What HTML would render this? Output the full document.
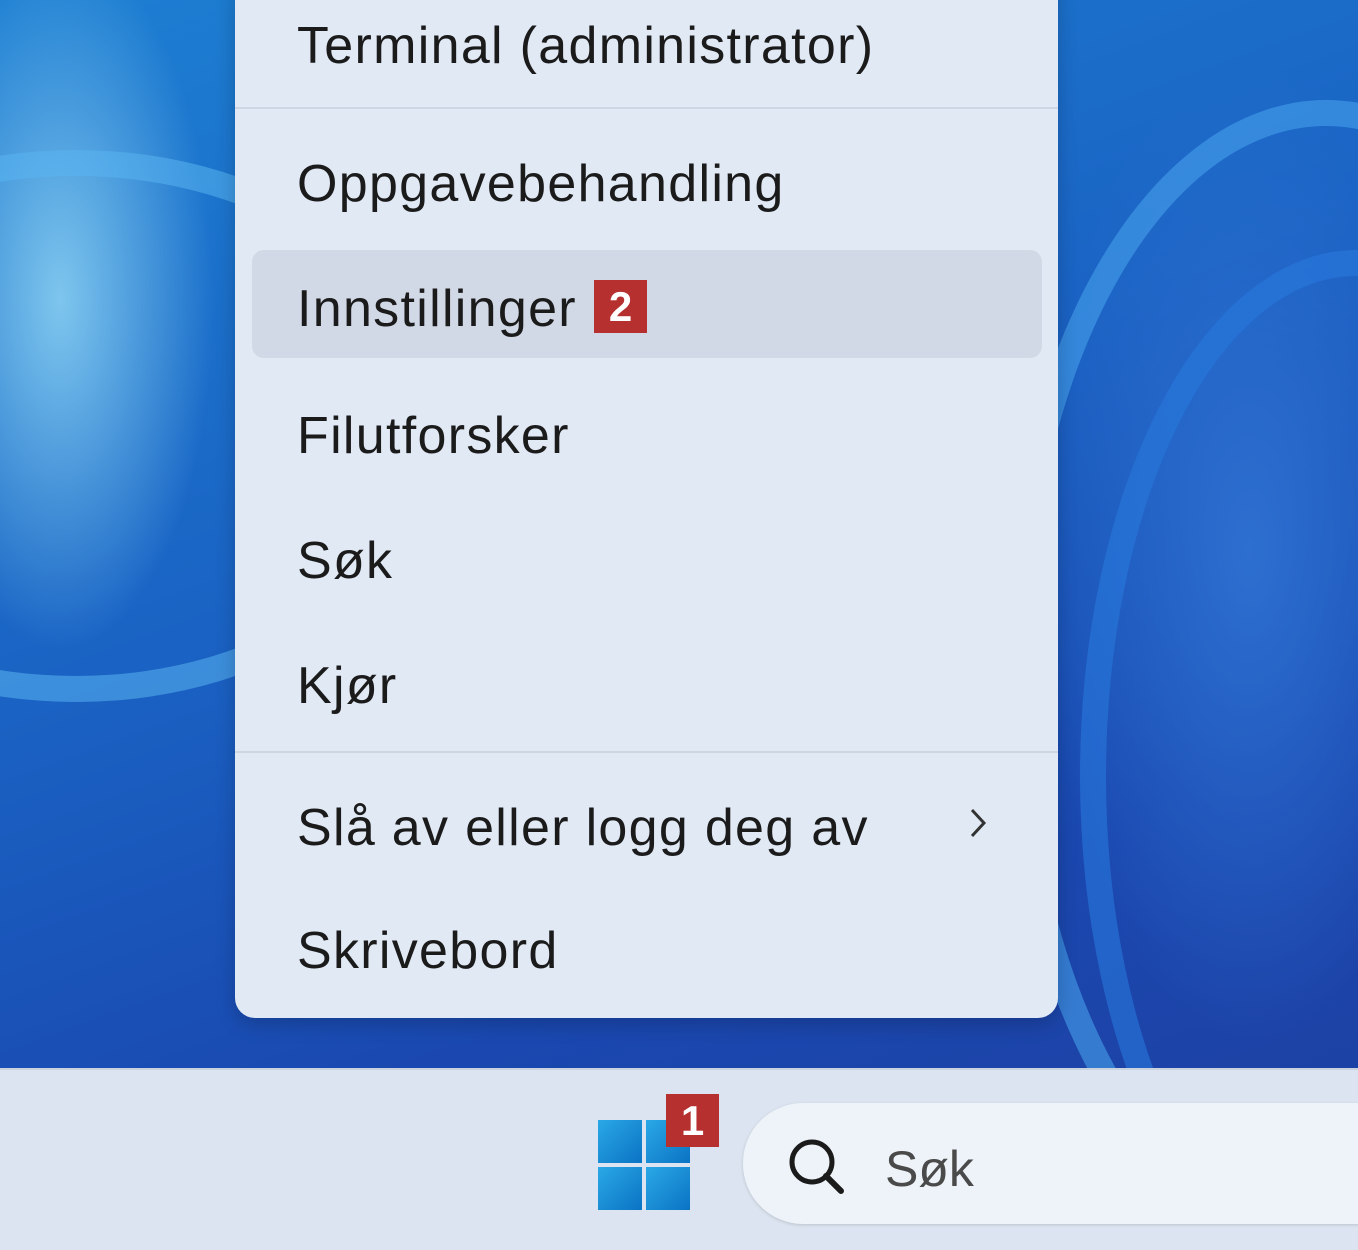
<!DOCTYPE html>
<html style="width:1358px;height:1250px;overflow:hidden;background:#dbe4f0"><head><meta charset="utf-8"><style>
html,body{margin:0;padding:0}
body{width:1358px;height:1250px;overflow:hidden;position:relative;font-family:"Liberation Sans",sans-serif;
background:
radial-gradient(ellipse 300px 700px at 1250px 550px,#2d6fd0 0%,rgba(45,111,208,0) 70%),
radial-gradient(ellipse 220px 500px at 60px 300px,#7ec6ee 0%,rgba(126,198,238,0) 70%),
linear-gradient(160deg,#1d7fd2 0%,#1a63c4 40%,#1a48b0 70%,#1f3fa0 100%);}
.sw{position:absolute;border-radius:50%;border:26px solid rgba(90,180,240,.55)}
.menu{position:absolute;left:235px;top:-30px;width:823px;height:1048px;background:#e0e9f4;border-radius:20px;box-shadow:0 6px 20px rgba(0,0,0,.2)}
.it{position:absolute;left:297px;font-size:52px;color:#1b1b1b;line-height:1;letter-spacing:1.3px}
.sep{position:absolute;left:235px;width:823px;height:2px;background:#cdd6e2}
.hl{position:absolute;left:252px;top:250px;width:790px;height:108px;background:#d2d9e6;border-radius:12px}
.badge{position:absolute;background:#b5302f;color:#fff;font-weight:bold;font-size:42px;text-align:center;line-height:53px;width:53px;height:53px}
.task{position:absolute;left:0;top:1068px;width:1358px;height:182px;background:#dbe4f0;border-top:2px solid #c9d3e0}
.sq{position:absolute;width:44px;height:43px;background:linear-gradient(135deg,#2aa8e6,#0a73c4)}
.pill{position:absolute;left:743px;top:1103px;width:700px;height:121px;border-radius:60px;background:#eef3f9;box-shadow:0 1px 3px rgba(0,0,0,.15)}
</style></head><body>
<div class="sw" style="left:-300px;top:150px;width:700px;height:500px"></div>
<div class="sw" style="left:1000px;top:100px;width:600px;height:1100px;border-color:rgba(70,160,235,.6)"></div>
<div class="sw" style="left:1080px;top:250px;width:500px;height:1000px;border-color:rgba(40,120,220,.6)"></div>
<div class="menu"></div>
<div class="sep" style="top:107px"></div>
<div class="sep" style="top:751px"></div>
<div class="hl"></div>
<div class="it" style="top:20px">Terminal (administrator)</div>
<div class="it" style="top:158px">Oppgavebehandling</div>
<div class="it" style="top:283px">Innstillinger</div>
<div class="badge" style="left:594px;top:280px">2</div>
<div class="it" style="top:410px">Filutforsker</div>
<div class="it" style="top:535px">Søk</div>
<div class="it" style="top:660px">Kjør</div>
<div class="it" style="top:802px">Slå av eller logg deg av</div>
<svg style="position:absolute;left:966px;top:806px" width="24" height="34"><path d="M6 4 L18 17 L6 30" fill="none" stroke="#333" stroke-width="3"/></svg>
<div class="it" style="top:925px">Skrivebord</div>
<div class="task"></div>
<div class="sq" style="left:598px;top:1120px"></div>
<div class="sq" style="left:646px;top:1120px"></div>
<div class="sq" style="left:598px;top:1167px"></div>
<div class="sq" style="left:646px;top:1167px"></div>
<div class="badge" style="left:666px;top:1094px">1</div>
<div class="pill"></div>
<svg style="position:absolute;left:785px;top:1135px" width="64" height="64"><circle cx="27" cy="27" r="20" fill="none" stroke="#1b1b1b" stroke-width="5"/><path d="M41 41 L56 56" stroke="#1b1b1b" stroke-width="6" stroke-linecap="round"/></svg>
<div style="position:absolute;left:885px;top:1140px;font-size:50px;color:#4a4a4a">Søk</div>
</body></html>
